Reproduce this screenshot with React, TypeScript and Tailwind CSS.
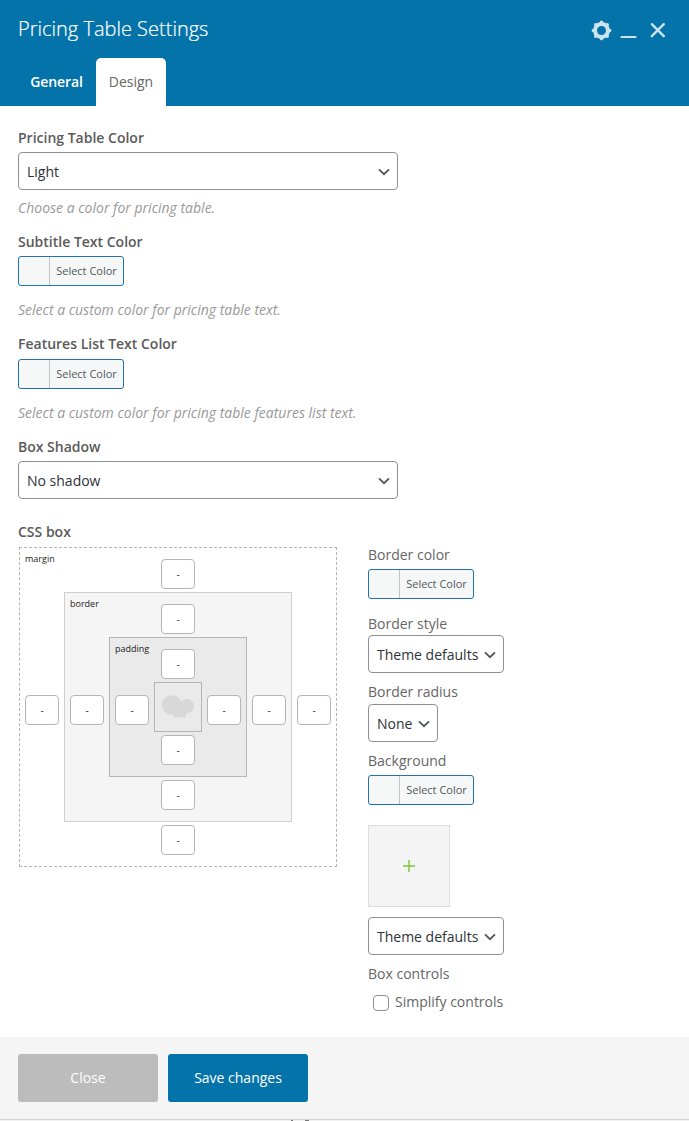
import React from "react";

function Chevron() {
  return (
    <svg className="mt-px" width="12" height="8" viewBox="0 0 12 8" fill="none" stroke="#50565c" strokeWidth="1.8">
      <path d="M1 1.3 L6 6.2 L11 1.3" />
    </svg>
  );
}

function Select({ value, className }: { value: string; className: string }) {
  return (
    <button
      className={`flex h-[38px] items-center justify-between rounded-[4px] border border-[#8c8f94] bg-white pr-[7px] pl-2 text-[14px] text-[#2c3338] ${className}`}
    >
      <span className="whitespace-nowrap">{value}</span>
      <Chevron />
    </button>
  );
}

function ColorButton({ className }: { className: string }) {
  return (
    <button
      className={`flex h-[30px] w-[106px] shrink-0 overflow-hidden rounded-[3px] border border-[#2271b1] bg-[#f6f7f7] ${className}`}
    >
      <span className="h-full w-[30px] shrink-0" />
      <span className="h-full flex-1 border-l border-[#c3c4c7] text-center text-[11px] leading-[28px] whitespace-nowrap text-[#50575e]">
        Select Color
      </span>
    </button>
  );
}

function Label({ children, className = "" }: { children: React.ReactNode; className?: string }) {
  return <div className={`h-5 text-[14px] leading-5 font-semibold text-[#5a5a5a] ${className}`}>{children}</div>;
}

function SideLabel({ children, className = "" }: { children: React.ReactNode; className?: string }) {
  return <div className={`h-5 text-[14px] leading-5 text-[#666] ${className}`}>{children}</div>;
}

function Hint({ children, className = "" }: { children: React.ReactNode; className?: string }) {
  return <div className={`h-5 text-[14px] leading-5 text-[#999] italic ${className}`}>{children}</div>;
}

function Value() {
  return (
    <div className="h-[30px] w-[34px] rounded-[4px] border border-[#b5b5b5] bg-white text-center text-[10px] leading-[29px] text-[#2c3338]">
      -
    </div>
  );
}

function Layer({ name, className, children }: { name: string; className: string; children: React.ReactNode }) {
  return (
    <div className={`relative grid grid-cols-[44px_1fr_44px] grid-rows-[44px_1fr_44px] border ${className}`}>
      <span className="absolute top-[5px] left-[5px] text-[9px] leading-3 text-[#222]">{name}</span>
      <div className="col-span-3 flex justify-center pt-[11px]"><Value /></div>
      <div className="flex items-center justify-center pt-[6px]"><Value /></div>
      {children}
      <div className="flex items-center justify-center pt-[6px]"><Value /></div>
      <div className="col-span-3 flex justify-center pt-[3px]"><Value /></div>
    </div>
  );
}

function CssBox() {
  return (
    <Layer name="margin" className="ml-px h-[320px] w-[318px] border-dashed border-[#b5b5b5]">
      <Layer name="border" className="border-[#cfcfcf] bg-[#f5f5f5]">
        <Layer name="padding" className="border-[#b5b5b5] bg-[#eaeaea]">
          <div className="flex justify-center border border-[#b5b5b5] bg-[#eaeaea] pt-[11px]">
            <svg width="34" height="26" viewBox="0 0 34 26" fill="#d8d8d8">
              <circle cx="10.8" cy="11" r="9.8" />
              <circle cx="26" cy="12" r="7" />
              <path d="M16 6L20 7L25 12L26 18.5L24 23.5H13L11.5 20.5V12Z" />
            </svg>
          </div>
        </Layer>
      </Layer>
    </Layer>
  );
}

export default function App() {
  return (
    <div className="flex h-[1121px] w-[689px] flex-col overflow-hidden bg-white font-['Open_Sans',sans-serif]">
      <header className="h-[106px] shrink-0 bg-[#0473aa]">
        <div className="flex h-[58px] items-start justify-between pr-[22px] pl-[18px]">
          <h1 className="pt-[15px] text-[20px] leading-[28px] font-light text-white [-webkit-text-stroke:0.2px_white]">
            Pricing Table Settings
          </h1>
          <div className="flex pt-5 text-[#cde3ee]">
            <svg width="21" height="21" viewBox="0 0 21 21" fill="currentColor">
              <circle cx="10.5" cy="10.5" r="6.5" fill="none" stroke="currentColor" strokeWidth="4" />
              <circle cx="18.6" cy="10.5" r="1.8" />
              <circle cx="16.2" cy="16.2" r="1.8" />
              <circle cx="10.5" cy="18.6" r="1.8" />
              <circle cx="4.8" cy="16.2" r="1.8" />
              <circle cx="2.4" cy="10.5" r="1.8" />
              <circle cx="4.8" cy="4.8" r="1.8" />
              <circle cx="10.5" cy="2.4" r="1.8" />
              <circle cx="16.2" cy="4.8" r="1.8" />
            </svg>
            <svg className="ml-2" width="17" height="21" viewBox="0 0 17 21" stroke="currentColor" strokeWidth="2.2" strokeLinecap="round">
              <path d="M1.5 17H15.5" />
            </svg>
            <svg className="ml-[13px]" width="17" height="21" viewBox="0 0 17 21" stroke="currentColor" strokeWidth="2.4" strokeLinecap="round">
              <path d="M1.8 4.2L13.8 16.2M13.8 4.2L1.8 16.2" />
            </svg>
          </div>
        </div>
        <nav className="flex h-12 pl-[17px] text-[14px] leading-[48px]">
          <div className="w-[79px] text-center font-semibold tracking-[-0.1px] text-white">General</div>
          <div className="w-[70px] rounded-t-[5px] bg-white text-center text-[#666]">Design</div>
        </nav>
      </header>

      <main className="h-[931px] shrink-0 px-[18px] pt-[22px]">
        <Label>Pricing Table Color</Label>
        <Select value="Light" className="mt-1 w-[380px]" />
        <Hint className="mt-2">Choose a color for pricing table.</Hint>
        <Label className="mt-3.5">Subtitle Text Color</Label>
        <ColorButton className="mt-1" />
        <Hint className="mt-3.5">Select a custom color for pricing table text.</Hint>
        <Label className="mt-3.5">Features List Text Color</Label>
        <ColorButton className="mt-[5px]" />
        <Hint className="mt-3.5">Select a custom color for pricing table features list text.</Hint>
        <Label className="mt-3.5">Box Shadow</Label>
        <Select value="No shadow" className="mt-1 w-[380px]" />
        <Label className="mt-[23px]">CSS box</Label>
        <div className="mt-[3px] flex">
          <div className="w-[350px] shrink-0 pt-0.5">
            <CssBox />
          </div>
          <div>
            <SideLabel>Border color</SideLabel>
            <ColorButton className="mt-1" />
            <SideLabel className="mt-[15px]">Border style</SideLabel>
            <Select value="Theme defaults" className="mt-px w-[136px]" />
            <SideLabel className="mt-[9px]">Border radius</SideLabel>
            <Select value="None" className="mt-0.5 w-[70px]" />
            <SideLabel className="mt-[9px]">Background</SideLabel>
            <ColorButton className="mt-1" />
            <div className="mt-5 flex size-[82px] items-center justify-center border border-[#ddd] bg-[#f4f4f4]">
              <svg width="12" height="12" viewBox="0 0 12 12" stroke="#83c43a" strokeWidth="1.4">
                <path d="M0 6H12M6 0V12" />
              </svg>
            </div>
            <Select value="Theme defaults" className="mt-2.5 w-[136px]" />
            <SideLabel className="mt-[9px]">Box controls</SideLabel>
            <label className="mt-2 flex h-5 items-start pl-[5px]">
              <span className="mt-[3px] size-4 rounded-[4px] border border-[#8c8f94] bg-white" />
              <span className="ml-1.5 text-[14px] leading-5 text-[#666]">Simplify controls</span>
            </label>
          </div>
        </div>
      </main>

      <footer className="flex h-[83px] shrink-0 gap-2.5 border-b border-[#d3d3d3] bg-[#f5f5f5] px-[18px] pt-[17px] text-[14px] text-white">
        <button className="h-12 w-[140px] rounded-[3px] bg-[#bcbcbc] pb-0.5">Close</button>
        <button className="h-12 w-[140px] rounded-[3px] bg-[#0473aa] pb-0.5">Save changes</button>
      </footer>
      <div className="flex h-px gap-3 bg-[#f1f1f1] pl-[291px]">
        <span className="h-px w-[2px] bg-[#777]" />
        <span className="h-px w-[4px] bg-[#777]" />
      </div>
    </div>
  );
}
